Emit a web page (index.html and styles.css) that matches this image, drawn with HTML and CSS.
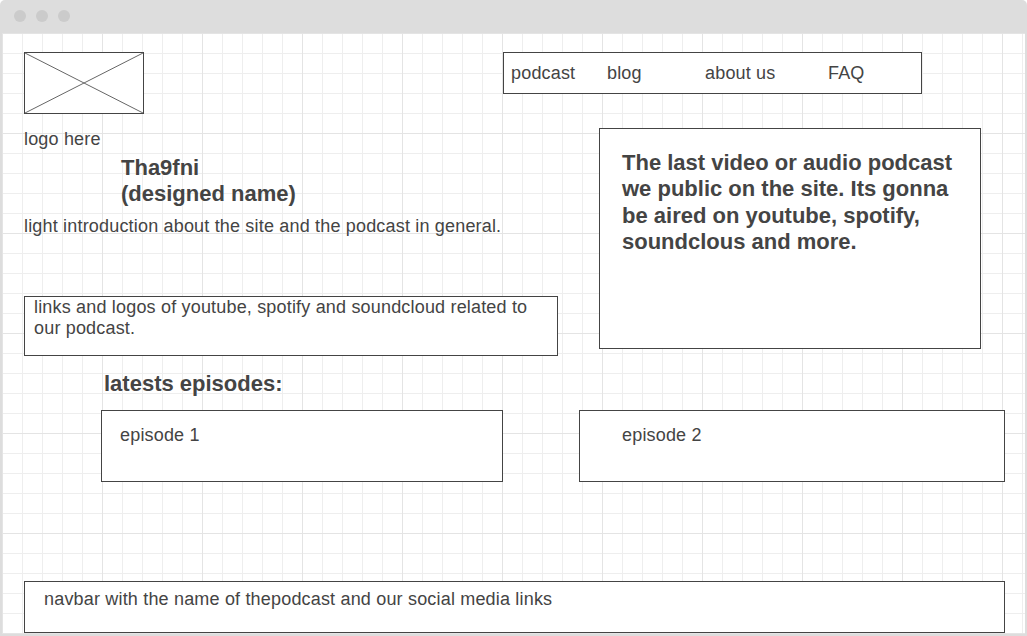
FILE: index.html
```html
<!DOCTYPE html>
<html>
<head>
<meta charset="utf-8">
<link rel="stylesheet" href="styles.css">
</head>
<body>
<div class="window">
  <div class="titlebar">
    <span class="dot"></span><span class="dot"></span><span class="dot"></span>
  </div>
  <div class="canvas">
    <div class="header">
      <div class="logo-box">
        <svg width="120" height="62" viewBox="0 0 120 62">
          <rect x="0.5" y="0.5" width="119" height="61" fill="#fff" stroke="#444" stroke-width="1"/>
          <line x1="1" y1="1" x2="119" y2="61" stroke="#666" stroke-width="1"/>
          <line x1="1" y1="61" x2="119" y2="1" stroke="#666" stroke-width="1"/>
        </svg>
      </div>
      <nav class="nav">
        <span class="nav-item nav-podcast">podcast</span>
        <span class="nav-item nav-blog">blog</span>
        <span class="nav-item nav-about">about us</span>
        <span class="nav-item">FAQ</span>
      </nav>
    </div>
    <div class="main">
      <div class="left">
        <p class="logo-label">logo here</p>
        <h1 class="title">Tha9fni<br>(designed name)</h1>
        <p class="intro">light introduction about the site and the podcast in general.</p>
        <div class="links-box">links and logos of youtube, spotify and soundcloud related to our podcast.</div>
      </div>
      <div class="video-box">The last video or audio podcast we public on the site. Its gonna be aired on youtube, spotify, soundclous and more.</div>
    </div>
    <h2 class="episodes-title">latests episodes:</h2>
    <div class="episodes">
      <div class="episode episode-one">episode 1</div>
      <div class="episode episode-two">episode 2</div>
    </div>
    <div class="footer">navbar with the name of thepodcast and our social media links</div>
  </div>
</div>
</body>
</html>
```

FILE: styles.css
```css
* { box-sizing: border-box; }

html, body {
  margin: 0;
  padding: 0;
  background: #fff;
}

body {
  font-family: "Liberation Sans", Arial, sans-serif;
  font-size: 18px;
  letter-spacing: 0.18px;
  color: #444;
}

.window {
  width: 1027px;
  height: 636px;
  display: flex;
  flex-direction: column;
}

.titlebar {
  height: 33px;
  flex: none;
  background: #dddddd;
  border-radius: 5px 5px 0 0;
  display: flex;
  align-items: center;
  gap: 10px;
  padding: 0 0 1px 14px;
}

.dot {
  width: 12px;
  height: 12px;
  border-radius: 50%;
  background: #cbcbcb;
}

.canvas {
  flex: 1;
  display: flex;
  flex-direction: column;
  border: 2px solid #dddddd;
  border-top: 0;
  padding: 19px 0 1px 22px;
  background-color: #fff;
  background-image:
    linear-gradient(to right, #e4e4e4 1px, transparent 1px),
    linear-gradient(to bottom, #e4e4e4 1px, transparent 1px),
    linear-gradient(to right, #eeeeee 1px, transparent 1px),
    linear-gradient(to bottom, #eeeeee 1px, transparent 1px);
  background-size: 100px 100px, 100px 100px, 20px 20px, 20px 20px;
}

.header {
  display: flex;
  align-items: flex-start;
  height: 62px;
}

.logo-box {
  width: 120px;
  height: 62px;
}

.logo-box svg { display: block; }

.nav {
  margin-left: 359px;
  width: 419px;
  height: 42px;
  border: 1px solid #444;
  background: #fff;
  display: flex;
  align-items: center;
  padding: 1px 0 0 7px;
  line-height: 20.7px;
}

.nav-item { flex: none; }
.nav-podcast { width: 96px; }
.nav-blog { width: 98px; }
.nav-about { width: 123px; }

.main {
  display: flex;
  align-items: flex-start;
  margin-top: 14px;
}

.left {
  width: 534px;
  display: flex;
  flex-direction: column;
  align-items: flex-start;
}

.logo-label {
  margin: 0;
  padding-top: 1px;
  line-height: 20.7px;
}

.title {
  margin: 5px 0 0 97px;
  font-size: 22px;
  font-weight: bold;
  letter-spacing: 0;
  line-height: 26.4px;
}

.intro {
  margin: 8px 0 0;
  line-height: 20.7px;
}

.links-box {
  margin-top: 60px;
  width: 534px;
  height: 60px;
  border: 1px solid #444;
  background: #fff;
  padding: 0 20px 0 9px;
  line-height: 20.7px;
}

.video-box {
  margin-left: 41px;
  width: 382px;
  height: 221px;
  border: 1px solid #444;
  background: #fff;
  padding: 21px 20px 0 22px;
  font-size: 22px;
  font-weight: bold;
  letter-spacing: 0;
  line-height: 26.4px;
}

.episodes-title {
  margin: 15px 0 0 80px;
  font-size: 22px;
  font-weight: bold;
  letter-spacing: 0;
  line-height: 26.4px;
}

.episodes {
  display: flex;
  margin: 12px 0 0 77px;
  gap: 76px;
}

.episode {
  height: 72px;
  border: 1px solid #444;
  background: #fff;
  padding-top: 14px;
  line-height: 20.7px;
}

.episode-one {
  width: 402px;
  padding-left: 18px;
}

.episode-two {
  width: 426px;
  padding-left: 42px;
}

.footer {
  margin-top: auto;
  width: 981px;
  height: 52px;
  border: 1px solid #444;
  background: #fff;
  padding: 7px 0 0 19px;
  line-height: 20.7px;
}
```
